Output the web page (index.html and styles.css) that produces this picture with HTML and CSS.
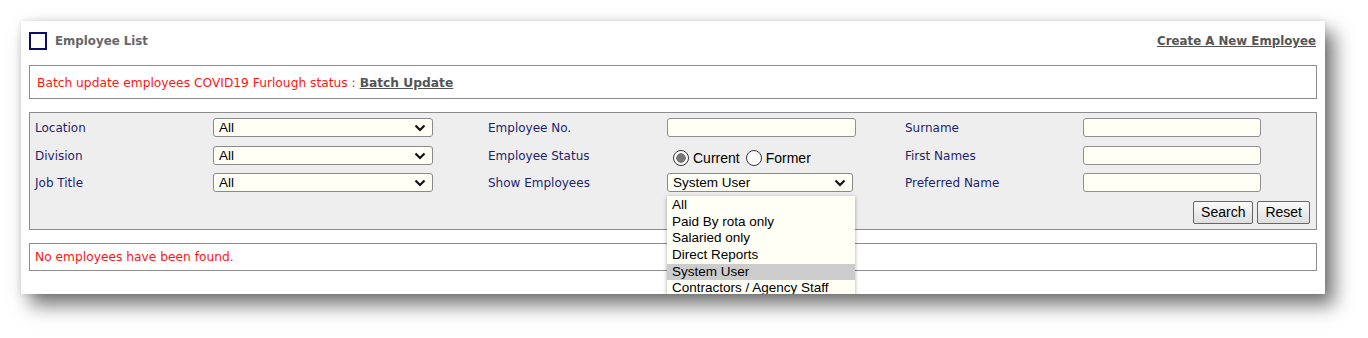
FILE: index.html
```html
<!DOCTYPE html>
<html lang="en">
<head>
    <meta charset="UTF-8">
    <meta name="viewport" content="width=device-width, initial-scale=1.0">
    <title>Employee List</title>
    <link rel="stylesheet" href="styles.css">
</head>
<body>
    <div class="panel">
        <div class="panel-head">
            <span class="box-icon"></span>
            <span class="title">Employee List</span>
            <a href="#" class="create-link">Create A New Employee</a>
        </div>

        <div class="notice">
            Batch update employees COVID19 Furlough status : <a href="#" class="batch-link">Batch Update</a>
        </div>

        <form class="filters" id="filterForm">
            <label for="location">Location</label>
            <div class="select-wrap">
                <select id="location"><option>All</option></select>
                <svg class="chev" width="12" height="8" viewBox="0 0 12 8"><path d="M1.5 1.5 L6 6 L10.5 1.5" fill="none" stroke="#111" stroke-width="2.2"/></svg>
            </div>
            <span></span>
            <label for="empNo">Employee No.</label>
            <input type="text" id="empNo">
            <span></span>
            <label for="surname">Surname</label>
            <input type="text" id="surname" class="short">
            <span></span>

            <label for="division">Division</label>
            <div class="select-wrap">
                <select id="division"><option>All</option></select>
                <svg class="chev" width="12" height="8" viewBox="0 0 12 8"><path d="M1.5 1.5 L6 6 L10.5 1.5" fill="none" stroke="#111" stroke-width="2.2"/></svg>
            </div>
            <span></span>
            <label>Employee Status</label>
            <div class="radios">
                <input type="radio" name="status" id="current" checked>
                <label for="current" class="radio-label">Current</label>
                <input type="radio" name="status" id="former">
                <label for="former" class="radio-label">Former</label>
            </div>
            <span></span>
            <label for="firstNames">First Names</label>
            <input type="text" id="firstNames" class="short">
            <span></span>

            <label for="jobTitle">Job Title</label>
            <div class="select-wrap">
                <select id="jobTitle"><option>All</option></select>
                <svg class="chev" width="12" height="8" viewBox="0 0 12 8"><path d="M1.5 1.5 L6 6 L10.5 1.5" fill="none" stroke="#111" stroke-width="2.2"/></svg>
            </div>
            <span></span>
            <label for="showEmp">Show Employees</label>
            <div class="select-wrap narrow">
                <select id="showEmp"><option>System User</option></select>
                <svg class="chev" width="12" height="8" viewBox="0 0 12 8"><path d="M1.5 1.5 L6 6 L10.5 1.5" fill="none" stroke="#111" stroke-width="2.2"/></svg>
                <ul class="dropdown">
                    <li>All</li>
                    <li>Paid By rota only</li>
                    <li>Salaried only</li>
                    <li>Direct Reports</li>
                    <li class="selected">System User</li>
                    <li>Contractors / Agency Staff</li>
                </ul>
            </div>
            <span></span>
            <label for="prefName">Preferred Name</label>
            <input type="text" id="prefName" class="short">
            <span></span>

            <div class="buttons">
                <button type="submit">Search</button>
                <button type="reset">Reset</button>
            </div>
        </form>

        <div class="result">No employees have been found.</div>
    </div>
</body>
</html>
```

FILE: styles.css
```css
html, body {
    height: 100%;
}

body {
    margin: 0;
    padding: 21px 0 0 21px;
    box-sizing: border-box;
    background: #ffffff;
    font-family: "DejaVu Sans", Verdana, sans-serif;
    font-size: 12px;
}

.panel {
    position: relative;
    overflow: hidden;
    width: 1288px;
    height: 262px;
    padding: 11px 8px 0 8px;
    background: #ffffff;
    box-shadow: 9px 11px 18px rgba(0, 0, 0, 0.55), 0 0 6px rgba(0, 0, 0, 0.12);
}

.panel-head {
    display: flex;
    align-items: center;
    height: 18px;
    margin-bottom: 15px;
}

.box-icon {
    width: 14px;
    height: 14px;
    border: 2px solid #0d0d6b;
    margin-right: 8px;
}

.title {
    font-weight: bold;
    font-size: 11.8px;
    color: #666666;
    flex: 1;
}

.create-link,
.batch-link {
    font-weight: bold;
    color: #555555;
}

.create-link {
    font-size: 11.8px;
    margin-right: 1px;
}

.notice {
    height: 30px;
    line-height: 30px;
    padding: 2px 7px 0 7px;
    border: 1px solid #8c8c8c;
    color: #ff1414;
    font-size: 12.25px;
}

.filters {
    margin: 13px 0 0 0;
    height: 105px;
    padding: 5px 6px 6px 5px;
    border: 1px solid #8c8c8c;
    background: #eeeeee;
    display: grid;
    grid-template-columns: 178px 220px 55px 179px 189px 49px 178px 178px 1fr;
    grid-auto-rows: 19px;
    row-gap: 8.5px;
    align-items: center;
}

.filters > label {
    color: #1e1e6e;
    padding-top: 1px;
}

.select-wrap {
    position: relative;
    height: 19px;
}

.select-wrap select {
    appearance: none;
    width: 100%;
    height: 19px;
    margin: 0;
    padding: 0 0 0 5px;
    border: 1px solid #8a8a8a;
    border-radius: 3px;
    background: #fffff6;
    font-family: "Liberation Sans", Arial, sans-serif;
    font-size: 13.5px;
    color: #000;
}

.select-wrap.narrow {
    width: 186px;
}

.chev {
    position: absolute;
    right: 7px;
    top: 6px;
}

.filters input[type="text"] {
    box-sizing: border-box;
    width: 189px;
    height: 19px;
    margin: 0;
    border: 1px solid #909090;
    border-radius: 3px;
    background: #fffff6;
}

.filters input.short {
    width: 178px;
}

.radios {
    display: flex;
    align-items: center;
    padding-top: 6px;
    padding-left: 6px;
    font-family: "Liberation Sans", Arial, sans-serif;
    font-size: 14px;
}

.radios input {
    appearance: none;
    box-sizing: border-box;
    width: 16px;
    height: 16px;
    margin: 0 4px 0 0;
    border: 1px solid #333333;
    border-radius: 50%;
    background: #ffffff;
}

.radios input:checked {
    background: radial-gradient(circle, #777777 0 4.5px, #ffffff 5px);
}

.radio-label {
    color: #000;
    margin-right: 6px;
}

.dropdown {
    position: absolute;
    left: 0;
    top: 23px;
    width: 188px;
    margin: 0;
    padding: 1px 0 0 0;
    list-style: none;
    background: #fffff6;
    box-shadow: 0 1px 4px rgba(0, 0, 0, 0.35);
    font-family: "Liberation Sans", Arial, sans-serif;
    font-size: 13.5px;
    z-index: 2;
}

.dropdown li {
    height: 16.7px;
    line-height: 16.7px;
    padding-left: 5px;
    color: #000;
}

.dropdown li.selected {
    background: #cccccc;
}

.buttons {
    grid-column: 1 / -1;
    grid-row: 4;
    align-self: start;
    display: flex;
    justify-content: flex-end;
    gap: 4px;
    height: 23px;
}

.buttons button {
    height: 23px;
    padding: 0 7px;
    border: 1px solid #666666;
    border-radius: 2px;
    background: linear-gradient(#fbfbfb, #dedede);
    font-family: "Liberation Sans", Arial, sans-serif;
    font-size: 14px;
    color: #000;
}

.result {
    margin-top: 13px;
    height: 26px;
    line-height: 27px;
    border: 1px solid #8c8c8c;
    padding: 0 5px;
    color: #ff1414;
    font-size: 12.25px;
}
```
